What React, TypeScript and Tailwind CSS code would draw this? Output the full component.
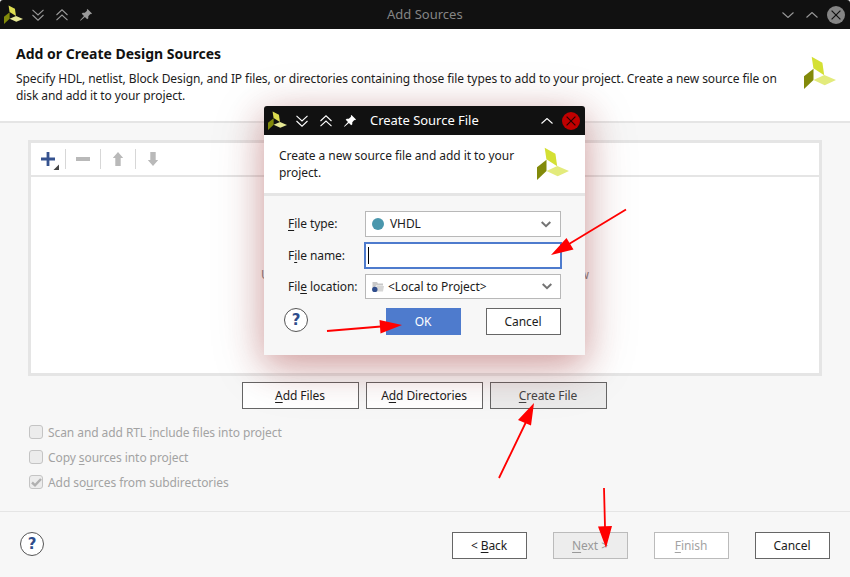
import type { ReactNode } from 'react';

function Logo({ className, small }: { className: string; small?: boolean }) {
  return (
    <svg className={className} viewBox="0 0 32 33" preserveAspectRatio="none">
      <path d="M7.7 .7 18.4 6.7 20.2 19.2 9.4 12.3Z" fill={small ? '#dcdc50' : '#d4e034'} />
      <path d="M0 20.3 9.5 12.7V24L0 33Z" fill="#828a0a" />
      <path d="M9.5 24 20.3 19 32 24.1 20.7 29.2Z" fill={small ? '#e6e894' : '#e3eb7c'} />
    </svg>
  );
}

function Double({ up, className }: { up?: boolean; className: string }) {
  return (
    <svg className={className} width="12" height="12" viewBox="0 0 12 12" fill="none" stroke="currentColor" strokeWidth="1.1">
      <path d={up ? 'M.5 6 6 .8 11.5 6M.5 11.2 6 6 11.5 11.2' : 'M.5 .8 6 6 11.5 .8M.5 6 6 11.2 11.5 6'} />
    </svg>
  );
}

function Pin({ className }: { className: string }) {
  return (
    <svg className={className} width="12" height="12" viewBox="0 0 12 12" fill="currentColor">
      <path d="M7.5 0 12 4.5 11 5.2 10.3 5 8.3 7.3 8.3 9.2 7.2 10.3 4.9 8 .8 11.6 0 11.8.3 11 4 7 1.7 4.8 2.8 3.7 4.8 3.7 7 1.7 6.8.8Z" />
    </svg>
  );
}

function Caret({ up, className }: { up?: boolean; className?: string }) {
  return (
    <svg className={className} width="12" height="6" viewBox="0 0 12 6" fill="none" stroke="currentColor" strokeWidth="1.1">
      <path d={up ? 'M.5 5.5 6 .5 11.5 5.5' : 'M.5 .5 6 5.5 11.5 .5'} />
    </svg>
  );
}

function Close({ bg, fg }: { bg: string; fg: string }) {
  return (
    <svg width="18" height="18" viewBox="0 0 18 18">
      <circle cx="9" cy="9" r="9" fill={bg} />
      <path d="M4.6 4.6 13.4 13.4M13.4 4.6 4.6 13.4" stroke={fg} strokeWidth="1.2" />
    </svg>
  );
}

function U({ children }: { children: ReactNode }) {
  return <span className="underline decoration-1 underline-offset-2 [text-decoration-skip-ink:none]">{children}</span>;
}

function Button({ children, className }: { children: ReactNode; className: string }) {
  return <button className={`flex h-[27px] shrink-0 items-center justify-center border pr-px whitespace-pre ${className}`}>{children}</button>;
}

function Help() {
  return (
    <span className="flex h-6 w-6 shrink-0 items-center justify-center rounded-full border border-[#555] bg-white font-['DejaVu_Sans',sans-serif] text-[15px] leading-none font-bold tracking-normal text-[#2f4d8c]">?</span>
  );
}

function Check({ checked, children }: { checked?: boolean; children: ReactNode }) {
  return (
    <div className="flex h-[25px] items-center gap-[5px] text-[#a3a3a3]">
      <span className="mb-px ml-px flex h-[14px] w-[14px] items-center justify-center rounded-[3px] border border-[#c4c4c4] bg-[#ececec]">
        {checked && (
          <svg width="11" height="9" viewBox="0 0 11 9" fill="none" stroke="#b0b0b0" strokeWidth="2.4">
            <path d="M1 4.5 4 7.3 10 1" />
          </svg>
        )}
      </span>
      <span>{children}</span>
    </div>
  );
}

function DropArrow() {
  return (
    <svg width="10" height="7" viewBox="0 0 10 7" fill="none" stroke="#737373" strokeWidth="2">
      <path d="M.7 1 5 5.2 9.3 1" />
    </svg>
  );
}

function Dialog() {
  return (
    <section className="absolute top-[106px] left-[264px] flex h-[249px] w-[321px] flex-col rounded-t-[3px] bg-[#f7f7f7] shadow-[0_10px_34px_0_rgba(160,20,20,0.32),0_10px_56px_0_rgba(100,40,40,0.17)]">
      <header className="flex h-[29px] shrink-0 items-center rounded-t-[3px] bg-[#111] pr-[5px] pl-[4px] text-white">
        <Logo small className="-mt-px h-[19px] w-[19px]" />
        <Double className="ml-[9px]" />
        <Double up className="ml-3" />
        <Pin className="ml-3" />
        <span className="ml-[14px] text-[13px] tracking-[-0.03px]">Create Source File</span>
        <Caret up className="mr-[9px] ml-auto" />
        <Close bg="#c00000" fg="#280000" />
      </header>
      <div className="flex h-[61px] shrink-0 justify-between border-b-[3px] border-[#e5e5e5] bg-white pr-4 pl-[15px]">
        <p className="mt-3 leading-[17px] tracking-[-0.06px]">Create a new source file and add it to your<br />project.</p>
        <Logo className="mt-3 h-[33px] w-8" />
      </div>
      <div className="flex grow flex-col pr-6 pl-6">
        <div className="mt-[15px] flex h-[26px] items-center">
          <label className="mb-0.5 w-[77px]"><U>F</U>ile type:</label>
          <div className="flex h-[26px] w-[196px] items-center border border-[#b8b8b8] bg-white pr-[9px] pl-[6px]">
            <span className="mr-[6px] h-3 w-3 rounded-full bg-[#4a97ad]" />
            <span className="mr-auto mb-0.5">VHDL</span>
            <DropArrow />
          </div>
        </div>
        <div className="mt-[5px] flex h-[27px] items-center">
          <label className="w-[76px]">F<U>i</U>le name:</label>
          <div className="-mr-px flex h-[27px] w-[198px] items-center border-2 border-[#4e7bcd] bg-white pl-[2px]">
            <span className="h-[17px] w-px bg-black" />
          </div>
        </div>
        <div className="mt-[5px] flex h-[25px] items-center">
          <label className="w-[77px] whitespace-nowrap">Fil<U>e</U> location:</label>
          <div className="flex h-[25px] w-[196px] items-center border border-[#b8b8b8] bg-white pr-[8px] pl-[6px]">
            <svg className="mr-1" width="12" height="12" viewBox="0 0 12 12">
              <path d="M.5 1H5L6 2.5H11V4.5H4L2.5 8H.5Z" fill="#c8c8c8" />
              <path d="M4.5 5H12L11 10.5H3.5Z" fill="#d6d6d6" />
              <circle cx="2.8" cy="8.4" r="2.7" fill="#2f4d8c" />
            </svg>
            <span className="mr-auto">&lt;Local to Project&gt;</span>
            <DropArrow />
          </div>
        </div>
        <div className="mt-[9px] flex">
          <div className="-ml-1"><Help /></div>
          <Button className="ml-[78px] w-[75px] border-[#4e7bcd] bg-[#4e7bcd] text-white">OK</Button>
          <Button className="ml-[25px] w-[75px] border-[#666] bg-white">Cancel</Button>
        </div>
      </div>
    </section>
  );
}

export default function App() {
  return (
    <main className="relative flex h-[577px] w-[850px] flex-col overflow-hidden bg-[#f7f7f7] font-['Noto_Sans',sans-serif] text-[12px] leading-[17px] tracking-[-0.077px] text-[#1c1c1c]">
      <header className="flex h-[29px] shrink-0 items-center rounded-t-[3px] bg-[#111] pr-[5px] pl-[4px] text-[#999]">
        <Logo small className="-mt-px h-[19px] w-[19px]" />
        <Double className="ml-[9px]" />
        <Double up className="ml-3" />
        <Pin className="ml-3" />
        <span className="ml-[295px] text-[13px] tracking-normal text-[#858585]">Add Sources</span>
        <Caret className="mr-3 ml-auto" />
        <Caret up className="mr-[9px]" />
        <Close bg="#858585" fg="#111" />
      </header>
      <div className="flex h-[94px] shrink-0 justify-between border-b-2 border-[#e5e5e5] bg-white pr-[14px] pl-4">
        <div>
          <h1 className="mt-[16px] text-[14px] leading-[18px] font-bold tracking-normal text-[#111]">Add or Create Design Sources</h1>
          <p className="mt-[7px] whitespace-nowrap">Specify HDL, netlist, Block Design, and IP files, or directories containing those file types to add to your project. Create a new source file on<br />disk and add it to your project.</p>
        </div>
        <Logo className="mt-[27px] h-[33px] w-8" />
      </div>
      <section className="mt-[17px] ml-7 flex h-[236px] w-[794px] shrink-0 flex-col border-[3px] border-[#e5e5e5] bg-white">
        <div className="flex h-[34px] shrink-0 items-center border-b-2 border-[#e5e5e5] pl-[10px]">
          <svg width="20" height="22" viewBox="0 0 20 22">
            <path d="M0 11H14M7 4V18" stroke="#35528f" strokeWidth="2.8" />
            <path d="M18 16.5V22H12.5Z" fill="#444" />
          </svg>
          <i className="ml-[4px] h-5 w-px bg-[#d7d7d7]" />
          <i className="mx-[10px] h-1 w-[14px] bg-[#b9b9b9]" />
          <i className="h-5 w-px bg-[#d7d7d7]" />
          <svg className="mx-[12px]" width="10" height="14" viewBox="0 0 10 14" fill="#b9b9b9"><path d="M5 0 10.3 6H7.7V14H2.3V6H-.3Z" /></svg>
          <i className="h-5 w-px bg-[#d7d7d7]" />
          <svg className="mx-[12px]" width="10" height="14" viewBox="0 0 10 14" fill="#b9b9b9"><path d="M5 14 10.3 8H7.7V0H2.3V8H-.3Z" /></svg>
        </div>
        <div className="flex grow items-center justify-center pb-0.5 tracking-[-0.03px] text-[#888]">Use Add Files, Add Directories or Create File buttons below</div>
      </section>
      <div className="mt-[6px] ml-[242px] flex gap-[7px]">
        <Button className="w-[117px] border-[#666] bg-white"><U>A</U>dd Files</Button>
        <Button className="w-[117px] border-[#666] bg-white">A<U>d</U>d Directories</Button>
        <Button className="w-[117px] border-[#666] bg-[#ebebeb] text-[#444]"><U>C</U>reate File</Button>
      </div>
      <div className="mt-[11px] ml-7 flex flex-col">
        <Check>Scan and add RTL <U>i</U>nclude files into project</Check>
        <Check>Copy <U>s</U>ources into project</Check>
        <Check checked>Add so<U>u</U>rces from subdirectories</Check>
      </div>
      <footer className="mt-auto flex h-[66px] shrink-0 border-t border-[#e5e5e5] pt-5 pl-5">
        <Help />
        <Button className="ml-[408px] w-[75px] border-[#666] bg-white">{'< '}<U>B</U>ack</Button>
        <Button className="ml-[26px] w-[75px] border-[#bbb] bg-[#ededed] text-[#999]"><U>N</U>ext {'>'}</Button>
        <Button className="ml-[26px] w-[75px] border-[#bbb] bg-white text-[#a3a3a3]"><U>F</U>inish</Button>
        <Button className="ml-[26px] w-[75px] border-[#666] bg-white">Cancel</Button>
      </footer>
      <Dialog />
      <svg className="pointer-events-none absolute inset-0" width="850" height="577" viewBox="0 0 850 577" fill="red" stroke="red">
        <g strokeWidth="1.8">
          <path d="M626 209.5 569 244M327 331 381 326.5M499 478 526 422M604 488 605 527" />
        </g>
        <g stroke="none">
          <path d="M551 255 566.5 238 573.5 249.5ZM402 325 379.5 320 380.5 333.5ZM534 403 518 420 531 425.5ZM606 548 598 526.5 612 526Z" />
        </g>
      </svg>
    </main>
  );
}
